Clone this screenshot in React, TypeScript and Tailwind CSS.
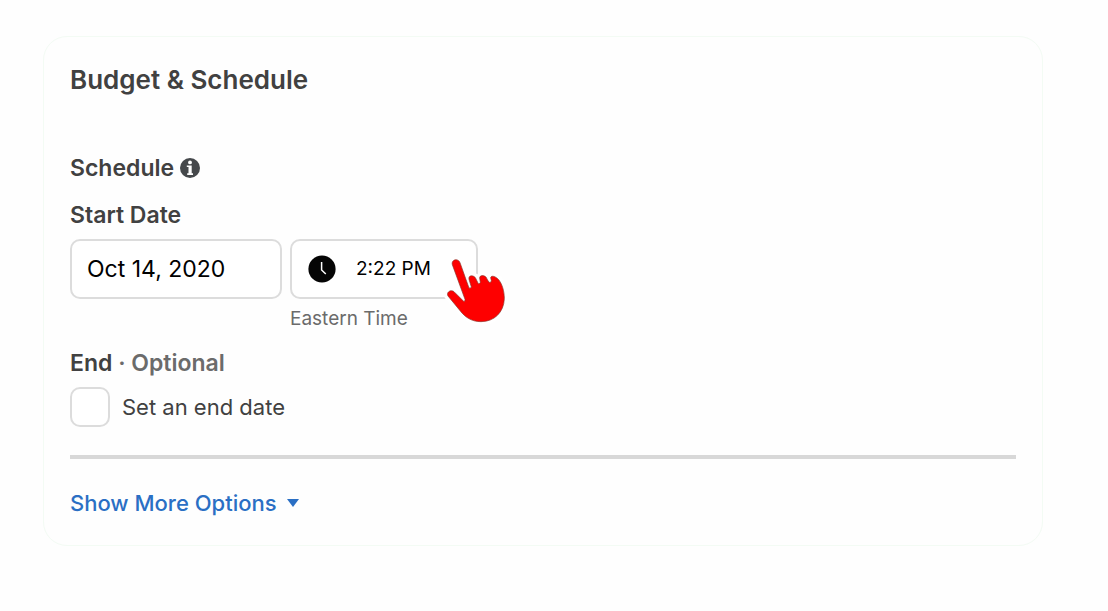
import { useState } from "react"

const handPath =
  "M67 59C63 44 84 38 90 53L117 129Q122 131 124 126L117 103C114 88 134 90 138 102L145 116Q150 117 151 112L149 99C149 88 168 90 171 102L177 112Q184 114 184 107L182 98C184 90 197 94 206 104C216 116 223 138 223 160C222 203 192 230 153 230C124 230 105 216 91 198L54 153C48 142 62 132 72 140L101 169Q106 171 105 163Z"

function InfoIcon() {
  return (
    <svg viewBox="0 0 20 20" className="h-5 w-5" aria-hidden="true">
      <circle cx="10" cy="10" r="10" fill="#45484b" />
      <circle cx="10" cy="4.4" r="1.9" fill="#fff" />
      <path d="M6.8 7.4h4.9v7.8H13v1.7H7.2v-1.7h1.3V9.1H6.8z" fill="#fff" />
    </svg>
  )
}

function ClockIcon() {
  return (
    <svg viewBox="0 0 28 28" className="h-7 w-7 shrink-0" aria-hidden="true">
      <circle cx="14" cy="14" r="13.6" fill="#050505" />
      <path d="M13.6 7v8l4.2 4" fill="none" stroke="#fff" strokeWidth="1.5" />
    </svg>
  )
}

function HandPointer() {
  return (
    <svg
      viewBox="0 0 270 270"
      className="pointer-events-none absolute top-1 left-[138px] h-[90px] w-[90px]"
      aria-hidden="true"
    >
      <path d={handPath} fill="#fff" stroke="#fff" strokeWidth="22" strokeLinejoin="round" />
      <path d={handPath} fill="#fe0000" stroke="#8a3328" strokeWidth="2" />
    </svg>
  )
}

export default function App() {
  const [date, setDate] = useState("Oct 14, 2020")
  const [time, setTime] = useState("2:22 PM")
  const [hasEnd, setHasEnd] = useState(false)

  return (
    <main className="min-h-screen bg-[#fefefe] py-9 pr-[65px] pl-[43px] font-['Inter',sans-serif] text-[#414141]">
      <section className="rounded-3xl border border-[#f3fbf4] bg-[#fefefe] px-[26px] pt-[27px] pb-[26px]">
        <h1 className="text-[26px] leading-8 font-semibold">Budget &amp; Schedule</h1>

        <div className="mt-14 flex items-center gap-1.5">
          <h2 className="text-[23px] leading-8 font-semibold">Schedule</h2>
          <button type="button" aria-label="About schedule">
            <InfoIcon />
          </button>
        </div>

        <label htmlFor="start-date" className="mt-[15px] block text-[23px] leading-8 font-semibold">
          Start Date
        </label>
        <div className="mt-2 flex items-start gap-2">
          <input
            id="start-date"
            type="text"
            value={date}
            onChange={(e) => setDate(e.target.value)}
            className="h-15 w-53 rounded-[10px] border-2 border-[#dcdcdc] bg-white px-[15px] text-[23px] text-black outline-none"
          />
          <div>
            <div className="relative flex h-15 w-47 items-center gap-5 rounded-[10px] border-2 border-[#dcdcdc] bg-white pl-4">
              <ClockIcon />
              <input
                type="text"
                aria-label="Start time"
                value={time}
                onChange={(e) => setTime(e.target.value)}
                className="w-24 bg-transparent text-[19px] text-black outline-none"
              />
              <HandPointer />
            </div>
            <p className="mt-2 text-[19px] leading-6 text-[#6b6b6b]">Eastern Time</p>
          </div>
        </div>

        <h3 className="mt-4 text-[23px] leading-8 font-semibold">
          End <span className="text-[#6b6b6b]">· Optional</span>
        </h3>
        <div className="mt-2 flex items-center gap-3">
          <input
            id="end-date"
            type="checkbox"
            checked={hasEnd}
            onChange={(e) => setHasEnd(e.target.checked)}
            className="h-10 w-10 appearance-none rounded-[10px] border-2 border-[#dcdcdc] bg-white checked:bg-[#2a6fc4]"
          />
          <label htmlFor="end-date" className="text-[22px] leading-8">
            Set an end date
          </label>
        </div>

        <hr className="mt-7 border-t-4 border-[#d8d8d8]" />

        <button
          type="button"
          className="mt-7 flex items-center gap-2.5 text-[22px] leading-8 font-medium text-[#2a6fc4]"
        >
          Show More Options
          <svg viewBox="0 0 12 8" className="h-2 w-3" aria-hidden="true">
            <path d="M0 0h12L6 8z" fill="currentColor" />
          </svg>
        </button>
      </section>
    </main>
  )
}
